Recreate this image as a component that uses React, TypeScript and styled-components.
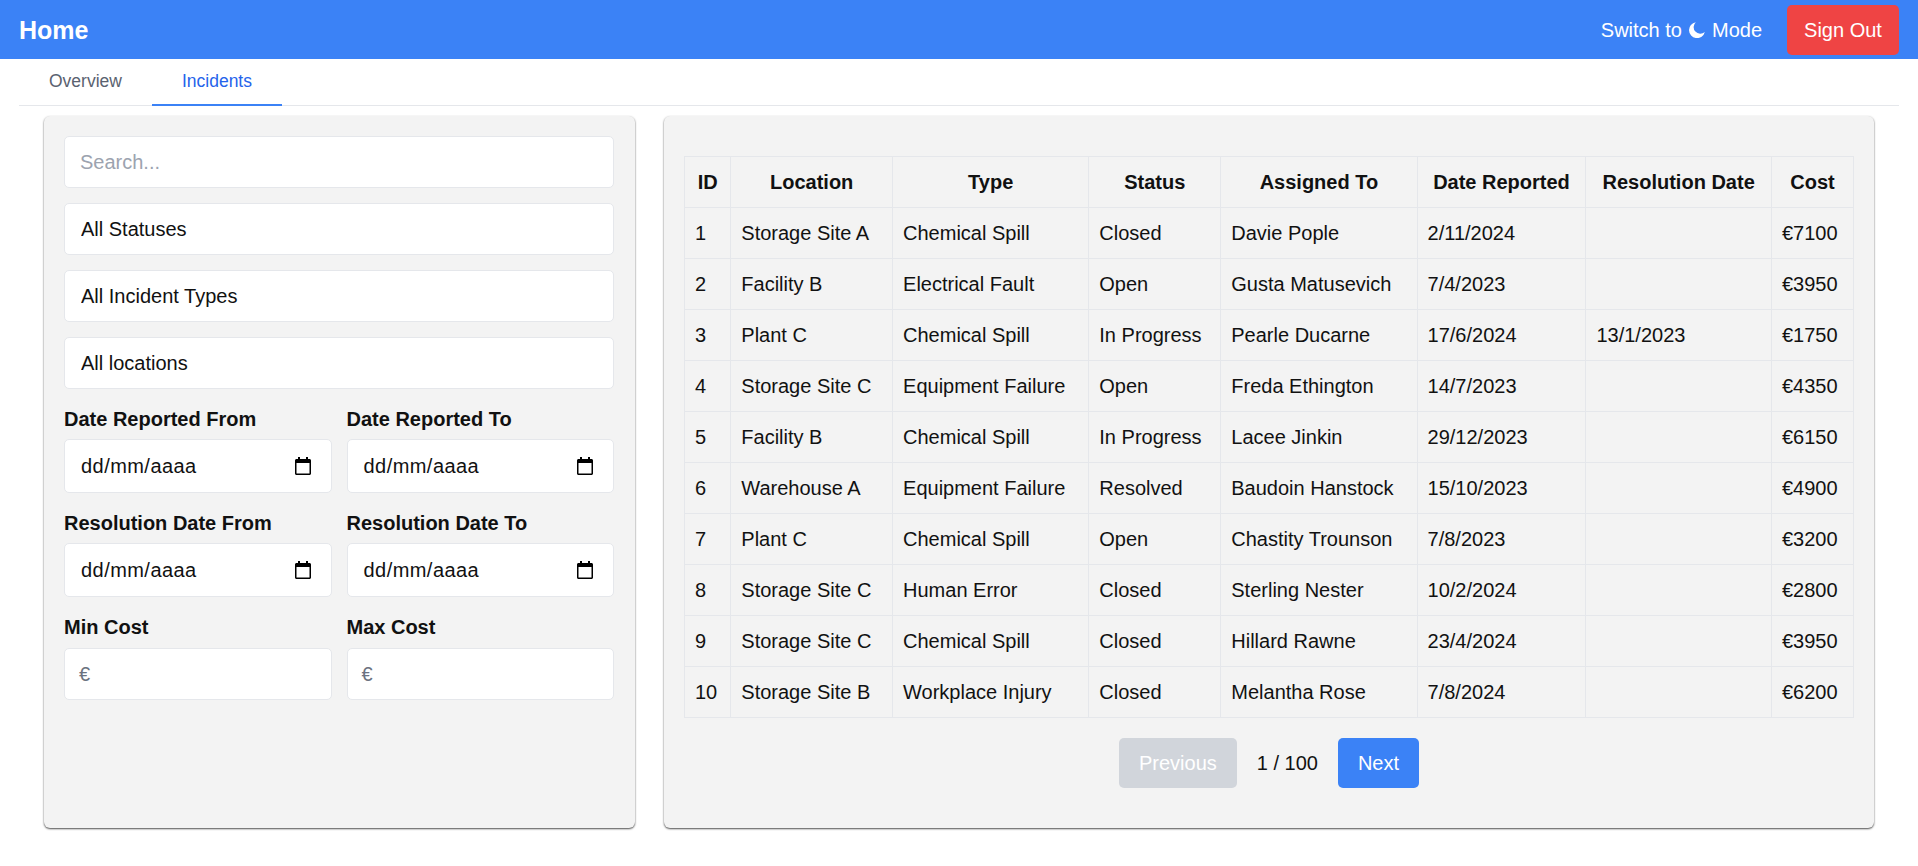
import styled, { createGlobalStyle } from 'styled-components';

interface IIncident {
  id: number;
  location: string;
  type: string;
  status: string;
  assignedTo: string;
  reported: string;
  resolved: string;
  cost: number;
}

const INCIDENTS: IIncident[] = [
  { id: 1, location: 'Storage Site A', type: 'Chemical Spill', status: 'Closed', assignedTo: 'Davie Pople', reported: '2/11/2024', resolved: '', cost: 7100 },
  { id: 2, location: 'Facility B', type: 'Electrical Fault', status: 'Open', assignedTo: 'Gusta Matusevich', reported: '7/4/2023', resolved: '', cost: 3950 },
  { id: 3, location: 'Plant C', type: 'Chemical Spill', status: 'In Progress', assignedTo: 'Pearle Ducarne', reported: '17/6/2024', resolved: '13/1/2023', cost: 1750 },
  { id: 4, location: 'Storage Site C', type: 'Equipment Failure', status: 'Open', assignedTo: 'Freda Ethington', reported: '14/7/2023', resolved: '', cost: 4350 },
  { id: 5, location: 'Facility B', type: 'Chemical Spill', status: 'In Progress', assignedTo: 'Lacee Jinkin', reported: '29/12/2023', resolved: '', cost: 6150 },
  { id: 6, location: 'Warehouse A', type: 'Equipment Failure', status: 'Resolved', assignedTo: 'Baudoin Hanstock', reported: '15/10/2023', resolved: '', cost: 4900 },
  { id: 7, location: 'Plant C', type: 'Chemical Spill', status: 'Open', assignedTo: 'Chastity Trounson', reported: '7/8/2023', resolved: '', cost: 3200 },
  { id: 8, location: 'Storage Site C', type: 'Human Error', status: 'Closed', assignedTo: 'Sterling Nester', reported: '10/2/2024', resolved: '', cost: 2800 },
  { id: 9, location: 'Storage Site C', type: 'Chemical Spill', status: 'Closed', assignedTo: 'Hillard Rawne', reported: '23/4/2024', resolved: '', cost: 3950 },
  { id: 10, location: 'Storage Site B', type: 'Workplace Injury', status: 'Closed', assignedTo: 'Melantha Rose', reported: '7/8/2024', resolved: '', cost: 6200 },
];

const COLUMNS = ['ID', 'Location', 'Type', 'Status', 'Assigned To', 'Date Reported', 'Resolution Date', 'Cost'];

function MoonIcon() {
  return (
    <svg width="16" height="16" viewBox="0 0 16 16" aria-hidden="true">
      <path fill="#fff" d="M6.800.2A8 8 0 1 0 15.800 10 6.200 6.200 0 0 1 6.800.2Z" />
    </svg>
  );
}

function CalendarIcon() {
  return (
    <svg width="16" height="18" viewBox="0 0 16 18" aria-hidden="true">
      <path
        fill="#000"
        d="M3 0h2v2h6V0h2v2h1.500C15.300 2 16 2.700 16 3.500v13c0 .8-.7 1.500-1.500 1.500h-13C.7 18 0 17.300 0 16.500v-13C0 2.700.7 2 1.500 2H3V0Zm-1.500 6v10.500h13V6h-13Z"
      />
    </svg>
  );
}

function DateInput({ label }: { label: string }) {
  return (
    <Field $gap={5}>
      <FieldLabel>{label}</FieldLabel>
      <DateBox>
        <span>dd/mm/aaaa</span>
        <CalendarIcon />
      </DateBox>
    </Field>
  );
}

function CostInput({ label }: { label: string }) {
  return (
    <Field $gap={6}>
      <FieldLabel>{label}</FieldLabel>
      <CostBox>
        <Euro>€</Euro>
      </CostBox>
    </Field>
  );
}

export default function App() {
  return (
    <>
      <GlobalStyle />
      <Header>
        <Title>Home</Title>
        <HeaderActions>
          <ModeSwitch>
            <span>Switch to</span>
            <MoonIcon />
            <span>Mode</span>
          </ModeSwitch>
          <SignOut>Sign Out</SignOut>
        </HeaderActions>
      </Header>

      <Tabs>
        <Tab>Overview</Tab>
        <Tab $active>Incidents</Tab>
      </Tabs>

      <Content>
        <FiltersPanel>
          <SearchInput placeholder="Search..." />
          <FilterSelect>
            <option>All Statuses</option>
          </FilterSelect>
          <FilterSelect>
            <option>All Incident Types</option>
          </FilterSelect>
          <FilterSelect>
            <option>All locations</option>
          </FilterSelect>
          <FieldRow>
            <DateInput label="Date Reported From" />
            <DateInput label="Date Reported To" />
          </FieldRow>
          <FieldRow>
            <DateInput label="Resolution Date From" />
            <DateInput label="Resolution Date To" />
          </FieldRow>
          <FieldRow>
            <CostInput label="Min Cost" />
            <CostInput label="Max Cost" />
          </FieldRow>
        </FiltersPanel>

        <TablePanel>
          <Table>
            <thead>
              <tr>
                {COLUMNS.map((column) => (
                  <Th key={column}>{column}</Th>
                ))}
              </tr>
            </thead>
            <tbody>
              {INCIDENTS.map((incident) => (
                <tr key={incident.id}>
                  <Td>{incident.id}</Td>
                  <Td>{incident.location}</Td>
                  <Td>{incident.type}</Td>
                  <Td>{incident.status}</Td>
                  <Td>{incident.assignedTo}</Td>
                  <Td>{incident.reported}</Td>
                  <Td>{incident.resolved}</Td>
                  <Td>€{incident.cost}</Td>
                </tr>
              ))}
            </tbody>
          </Table>
          <Pagination>
            <PageButton disabled>Previous</PageButton>
            <PageInfo>1 / 100</PageInfo>
            <PageButton>Next</PageButton>
          </Pagination>
        </TablePanel>
      </Content>
    </>
  );
}

const GlobalStyle = createGlobalStyle`
  * {
    box-sizing: border-box;
  }

  body {
    margin: 0;
    background: #fff;
    color: #111;
    font-family: "Liberation Sans", Arial, sans-serif;
    font-size: 20px;
    line-height: 30px;
  }
`;

const Header = styled.header`
  display: flex;
  justify-content: space-between;
  align-items: center;
  height: 59px;
  padding: 0 19px;

  background: #3b82f6;
  color: #fff;
`;

const Title = styled.h1`
  margin: 0;

  font-size: 25px;
  font-weight: 700;
`;

const HeaderActions = styled.div`
  display: flex;
  align-items: center;
  column-gap: 25px;
`;

const ModeSwitch = styled.div`
  display: flex;
  align-items: center;
  column-gap: 7px;
`;

const SignOut = styled.button`
  height: 50px;
  width: 112px;
  padding: 0;

  background: #ef4444;
  color: #fff;
  border: none;
  border-radius: 5px;
  font: inherit;
`;

const Tabs = styled.nav`
  display: flex;
  height: 47px;
  margin: 0 19px;

  border-bottom: 1px solid #e5e7eb;
`;

const Tab = styled.div<{ $active?: boolean }>`
  height: 47px;
  padding: 7px 30px 0;

  color: ${(props) => (props.$active ? '#2563eb' : '#5a6270')};
  border-bottom: 2px solid ${(props) => (props.$active ? '#3b82f6' : 'transparent')};
  font-size: 17.5px;
`;

const Content = styled.main`
  display: grid;
  grid-template-columns: 591px 1fr;
  column-gap: 29px;
  height: 750px;
  margin-top: 10px;
  padding: 0 44px 38px;
`;

const Panel = styled.section`
  padding: 20px;

  background: #f3f3f3;
  border-radius: 6px;
  box-shadow: 0 1px 2px rgba(0, 0, 0, 0.7);
`;

const FiltersPanel = styled(Panel)`
  display: flex;
  flex-direction: column;
  row-gap: 15px;
  padding-right: 21px;
`;

const TablePanel = styled(Panel)`
  padding-top: 40px;
`;

const SearchInput = styled.input`
  width: 100%;
  height: 52px;
  padding: 0 15px;

  background: #fff;
  color: #111;
  border: 1px solid #e5e7eb;
  border-radius: 5px;
  font: inherit;

  &::placeholder {
    color: #9ca3af;
    opacity: 1;
  }
`;

const FilterSelect = styled.select`
  width: 100%;
  height: 52px;
  padding: 0 16px;

  appearance: none;
  background: #fff;
  color: #111;
  border: 1px solid #e5e7eb;
  border-radius: 5px;
  font: inherit;
`;

const FieldRow = styled.div`
  display: grid;
  grid-template-columns: 1fr 1fr;
  column-gap: 15px;
`;

const Field = styled.div<{ $gap: number }>`
  display: flex;
  flex-direction: column;
  row-gap: ${(props) => props.$gap}px;
`;

const FieldLabel = styled.label`
  font-weight: 700;
`;

const DateBox = styled.div`
  display: flex;
  justify-content: space-between;
  align-items: center;
  height: 54px;
  padding: 0 20px 0 16px;

  background: #fff;
  border: 1px solid #e5e7eb;
  border-radius: 5px;
  letter-spacing: 0.45px;
`;

const CostBox = styled.div`
  display: flex;
  align-items: center;
  height: 52px;
  padding: 0 14px;

  background: #fff;
  border: 1px solid #e5e7eb;
  border-radius: 5px;
`;

const Euro = styled.span`
  color: #6b7280;
`;

const Table = styled.table`
  width: 100%;
  border-collapse: collapse;
`;

const Th = styled.th`
  padding: 10px;

  border: 1px solid #e5e7eb;
  font-weight: 700;
  text-align: center;
`;

const Td = styled.td`
  padding: 10px;

  border: 1px solid #e5e7eb;
`;

const Pagination = styled.div`
  display: flex;
  justify-content: center;
  align-items: center;
  column-gap: 20px;
  margin-top: 20px;
`;

const PageButton = styled.button`
  height: 50px;
  padding: 0 20px;

  background: ${(props) => (props.disabled ? '#d1d5db' : '#3b82f6')};
  color: #fff;
  border: none;
  border-radius: 5px;
  font: inherit;
`;

const PageInfo = styled.span`
  color: #111;
`;
